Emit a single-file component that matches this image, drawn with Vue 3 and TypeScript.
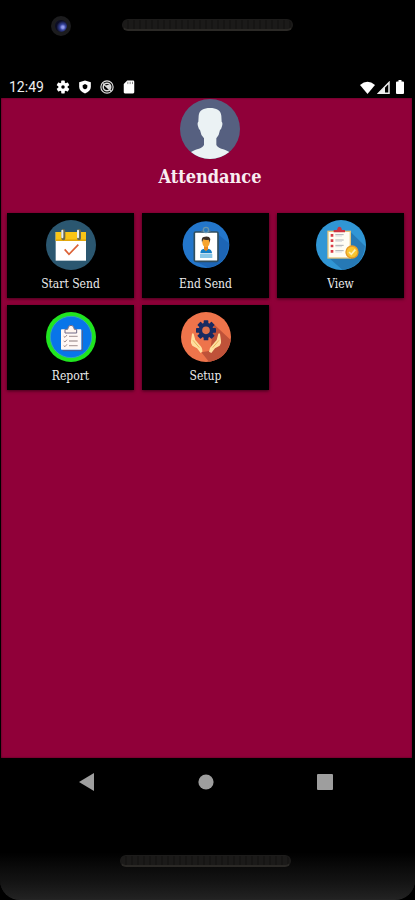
<script setup lang="ts">
type TileIcon = 'calendar' | 'badge' | 'checklist' | 'report' | 'setup'

interface Tile {
  label: string
  icon: TileIcon
}

const tiles: Tile[] = [
  { label: 'Start Send', icon: 'calendar' },
  { label: 'End Send', icon: 'badge' },
  { label: 'View', icon: 'checklist' },
  { label: 'Report', icon: 'report' },
  { label: 'Setup', icon: 'setup' },
]

const gearTeeth = [0, 45, 90, 135, 180, 225, 270, 315]
const cogTeeth = [0, 60, 120, 180, 240, 300]
</script>

<template>
  <div class="phone">
    <div class="bezel-top">
      <span class="camera"></span>
      <span class="speaker"></span>
    </div>

    <header class="status">
      <div class="status-left">
        <time class="clock">12:49</time>
        <svg class="status-icon" viewBox="0 0 24 24" aria-hidden="true">
          <g fill="#fff">
            <rect v-for="a in cogTeeth" :key="a" x="9" y="1" width="6" height="6" rx="1" :transform="`rotate(${a} 12 12)`" />
          </g>
          <circle cx="12" cy="12" r="5.5" fill="none" stroke="#fff" stroke-width="5" />
        </svg>
        <svg class="status-icon" viewBox="0 0 24 24" aria-hidden="true">
          <path d="M12 1 22 4V12C22 17 18 21 12 23 6 21 2 17 2 12V4Z" fill="#fff" />
          <path d="M12 7 16 9V12C16 14 14 15 12 16 10 15 8 14 8 12V9Z" fill="#000" />
        </svg>
        <svg class="status-icon" viewBox="0 0 24 24" aria-hidden="true">
          <circle cx="12" cy="12" r="10.5" fill="none" stroke="#ddd" stroke-width="2" />
          <circle cx="12" cy="12" r="6.5" fill="none" stroke="#ddd" stroke-width="2.5" />
          <path d="M5 6 19 19M12 10 16 14V9Z" fill="#ddd" stroke="#ddd" stroke-width="2" />
        </svg>
        <svg class="status-icon" viewBox="0 0 24 24" aria-hidden="true">
          <path d="M9 1H19Q21 1 21 3V21Q21 23 19 23H5Q3 23 3 21V7Z" fill="#fff" />
          <path d="M10 3V7M14 3V7M18 3V7" stroke="#777" stroke-width="1.5" />
        </svg>
      </div>
      <div class="status-right">
        <svg class="wifi" viewBox="0 0 15 13" aria-hidden="true">
          <path d="M0 4Q7.500-2.500 15 4L7.500 13Z" fill="#fff" />
        </svg>
        <svg class="signal" viewBox="0 0 13 13" aria-hidden="true">
          <path d="M1.500 12.200H12V1.500Z" fill="none" stroke="#eee" stroke-width="1.500" />
          <path d="M1 12.500 8 6V12.500Z" fill="#eee" />
        </svg>
        <svg class="battery" viewBox="0 0 8 14" aria-hidden="true">
          <path d="M2.500 0H5.500V1.500H7Q8 1.500 8 2.500V13Q8 14 7 14H1Q0 14 0 13V2.500Q0 1.500 1 1.500H2.500Z" fill="#fff" />
        </svg>
      </div>
    </header>

    <main class="screen">
      <div class="profile">
        <svg class="avatar" viewBox="0 0 180 180" role="img" aria-label="Profile">
          <circle cx="90" cy="90" r="90" fill="#566080" />
          <path
            d="M90 27C109 27 122 33 124 50L125 68Q129 71 126 82Q124 91 120 93Q118 108 109 118V137C112 149 133 149 148 159Q121 180 90 180Q58 180 33 159C48 149 69 149 72 137V118Q62 108 60 93Q56 91 54 82Q51 71 55 68L56 50C58 33 71 27 90 27Z"
            fill="#ebf2f4"
          />
        </svg>
        <h1 class="title">Attendance</h1>
      </div>

      <div class="tiles">
        <button v-for="tile in tiles" :key="tile.label" type="button" class="tile">
          <svg class="tile-icon" viewBox="0 0 150 150" aria-hidden="true">
            <g v-if="tile.icon === 'calendar'">
              <circle cx="75" cy="75" r="75" fill="#2b5770" />
              <path d="M29 36H120V122H29Z" fill="#fff" />
              <path d="M29 36H120V62H29Z" fill="#f9c515" />
              <path d="M29 58H120V63H29Z" fill="#e3a80c" />
              <g fill="none" stroke-linecap="round">
                <path d="M52 33V55M99 33V55" stroke="#6b6a4f" stroke-width="12" />
                <path d="M49 32V52M96 32V52" stroke="#e6edef" stroke-width="6" />
              </g>
              <path d="M56 88 69 103 97 74" fill="none" stroke="#dc6237" stroke-width="5" />
            </g>

            <g v-else-if="tile.icon === 'badge'">
              <circle cx="75" cy="74" r="70" fill="#2376cb" />
              <path d="M110 42 144 70Q140 132 82 143L45 125Z" fill="#1d65b5" />
              <rect x="40" y="36" width="71" height="88" rx="4" fill="#fff" stroke="#314e5d" stroke-width="5" />
              <path d="M61 39V34Q61 31 67 31H84Q89 31 89 35V39Z" fill="#547084" />
              <circle cx="75" cy="30" r="8" fill="#2a77b9" stroke="#6a95ad" stroke-width="4" />
              <path d="M58 100Q58 87 70 86H81Q93 88 93 100Z" fill="#137ec6" />
              <path d="M69 76H81V88L75 94 69 88Z" fill="#e78924" />
              <ellipse cx="75" cy="67" rx="11" ry="15" fill="#f7a52f" />
              <path d="M63 67Q60 53 68 51Q85 47 88 57L86 68 83 59Q74 62 67 58Z" fill="#3d3028" />
              <path d="M57 105H94M57 111H94" stroke="#62b4df" stroke-width="4" />
            </g>

            <g v-else-if="tile.icon === 'checklist'">
              <circle cx="75" cy="75" r="75" fill="#3096d5" />
              <path d="M104 36 147 78Q141 139 80 150L39 114Z" fill="#2679b5" />
              <rect x="36" y="34" width="67" height="80" fill="#fffdf3" stroke="#e6c77d" stroke-width="4" />
              <path d="M53 37V30H63Q65 20 70 20Q76 20 78 30H87V37Z" fill="#ce3341" />
              <path d="M44 46H52M44 62H52M44 78H52M44 94H52" stroke="#d83b46" stroke-width="8" />
              <path d="M58 44H83M58 60H83M58 76H83M58 92H83" stroke="#abaeb1" stroke-width="3" />
              <path d="M58 48H78M58 64H78M58 80H78M58 96H78" stroke="#dcdde0" stroke-width="3" />
              <circle cx="108" cy="96" r="18" fill="#fac52f" stroke="#e79b26" stroke-width="4" />
              <path d="M99 96 106 103 118 89" fill="none" stroke="#fff0b6" stroke-width="5" />
            </g>

            <g v-else-if="tile.icon === 'report'">
              <circle cx="75" cy="75" r="75" fill="#20e51f" />
              <circle cx="75" cy="75" r="62" fill="#0875e9" stroke="#30a4b9" stroke-width="3" />
              <path d="M50 116H109V55" fill="none" stroke="#565d8c" stroke-width="3" />
              <rect x="45" y="52" width="61" height="61" rx="2" fill="#fff8f5" />
              <path d="M57 63V52H65Q66 40 75 40Q84 40 85 52H92V63Z" fill="#fff5ee" stroke="#706985" stroke-width="3" />
              <path d="M53 73 57 76 63 69M53 87 57 90 63 83M53 101 57 104 63 97" fill="none" stroke="#a28d8e" stroke-width="3" />
              <path d="M69 73H95M69 87H95M69 101H95" stroke="#b3a2a2" stroke-width="4" />
            </g>

            <g v-else>
              <circle cx="75" cy="75" r="75" fill="#ee744b" />
              <path d="M98 36 149 84Q139 141 84 149L61 121 88 116Z" fill="#bf5239" />
              <g fill="#172b62">
                <rect v-for="a in gearTeeth" :key="a" x="68" y="25" width="14" height="15" rx="2" :transform="`rotate(${a} 75 55)`" />
              </g>
              <circle cx="75" cy="55" r="17" fill="#dd704b" stroke="#172b62" stroke-width="11" />
              <path d="M33 65Q38 61 39 69L43 84 56 99Q65 107 64 119L59 123 48 109 34 101Q28 94 30 86Z" fill="#ffdf9e" />
              <path d="M117 65Q112 61 111 69L107 84 94 99Q85 107 84 119L91 123 102 109 116 101Q122 94 120 86Z" fill="#ffdf9e" />
              <path d="M36 85 55 107M114 85 95 107" fill="none" stroke="#e9b45b" stroke-width="3" />
            </g>
          </svg>
          <span class="tile-label">{{ tile.label }}</span>
        </button>
      </div>
    </main>

    <nav class="navigation" aria-label="System navigation">
      <button type="button" class="nav-button" aria-label="Back">
        <svg viewBox="0 0 16 18" aria-hidden="true"><path d="M0 9 15 0V18Z" fill="#9e9e9e" /></svg>
      </button>
      <button type="button" class="nav-button" aria-label="Home">
        <svg viewBox="0 0 16 18" aria-hidden="true"><circle cx="8" cy="9" r="7.600" fill="#9e9e9e" /></svg>
      </button>
      <button type="button" class="nav-button" aria-label="Recent apps">
        <svg viewBox="0 0 16 18" aria-hidden="true"><rect y="1" width="16" height="16" rx="1" fill="#9e9e9e" /></svg>
      </button>
    </nav>

    <footer class="bezel-bottom">
      <span class="speaker speaker-bottom"></span>
    </footer>
  </div>
</template>

<style>
body {
  background: #000;
}
</style>

<style scoped>
.phone {
  display: flex;
  flex-direction: column;
  min-height: 100vh;
  background: #000;
  font-family: "DejaVu Serif Condensed", "DejaVu Serif", serif;
}

.bezel-top {
  display: grid;
  grid-template-columns: 1fr 171px 1fr;
  align-items: start;
  height: 76px;
  box-sizing: border-box;
  padding-top: 16px;
}

.camera {
  width: 20px;
  height: 20px;
  box-sizing: border-box;
  justify-self: center;
  border: 4px solid #1c1c1e;
  border-radius: 50%;
  background: radial-gradient(circle at 65% 60%, #929bed 0 10%, #35429a 28%, #0c0d24 60%);
}

.speaker {
  height: 12px;
  margin-top: 3px;
  box-sizing: border-box;
  border: 1px solid #1d1c1b;
  border-bottom: 2px solid #2b2926;
  border-radius: 6px;
  background: repeating-linear-gradient(90deg, #1b1a19 0 4px, #161514 4px 6px);
}

.camera + .speaker {
  margin-inline: 0;
}

.status {
  display: flex;
  align-items: center;
  justify-content: space-between;
  height: 22px;
  padding: 0 11px 0 9px;
}

.status-left,
.status-right {
  display: flex;
  align-items: center;
}

.status-left {
  gap: 8px;
}

.status-right {
  gap: 2px;
}

.clock {
  margin-right: 4px;
  color: #eee;
  font: 14px/20px Roboto, sans-serif;
}

.status-icon {
  width: 14px;
  height: 14px;
}

.wifi {
  width: 15px;
  height: 13px;
}

.signal {
  width: 13px;
  height: 13px;
}

.battery {
  width: 8px;
  height: 14px;
  margin-left: 4px;
}

.screen {
  flex: 1;
  margin: 0 3px 0 1px;
  background: #900039;
  box-shadow: inset 0 0 2px #3d0018;
}

.profile {
  display: flex;
  flex-direction: column;
  align-items: center;
  padding: 1px 0 0 7px;
}

.avatar {
  width: 60px;
  height: 60px;
}

.title {
  margin: 6px 0 0;
  color: #f8edf1;
  font-size: 18px;
  font-weight: 700;
  line-height: 24px;
}

.tiles {
  display: grid;
  grid-template-columns: repeat(3, 1fr);
  gap: 7px 8px;
  padding: 24px 8px 8px 6px;
}

.tile {
  display: flex;
  flex-direction: column;
  align-items: center;
  gap: 6px;
  min-width: 0;
  height: 85px;
  margin: 0;
  padding: 7px 0 0;
  border: 0;
  background: #000;
  box-shadow: 0 1px 3px #40001a;
  color: #ececec;
  font: inherit;
}

.tile-icon {
  width: 50px;
  height: 50px;
  flex: none;
}

.tile-label {
  font-size: 12px;
  line-height: 16px;
}

.navigation {
  display: flex;
  justify-content: center;
  gap: 79px;
  height: 48px;
  padding-right: 3px;
}

.nav-button {
  display: grid;
  place-items: center;
  width: 40px;
  margin: 0;
  padding: 0;
  border: 0;
  background: transparent;
}

.nav-button svg {
  width: 16px;
  height: 18px;
}

.bezel-bottom {
  display: flex;
  justify-content: center;
  align-items: start;
  height: 94px;
  box-sizing: border-box;
  padding: 46px 5px 0 0;
  border-bottom: 1px solid #252525;
  border-radius: 0 0 20px 20px;
  background: linear-gradient(#000 50%, #0a0a0a 65%, #141414 82%, #222 100%);
}

.speaker-bottom {
  width: 171px;
}
</style>
